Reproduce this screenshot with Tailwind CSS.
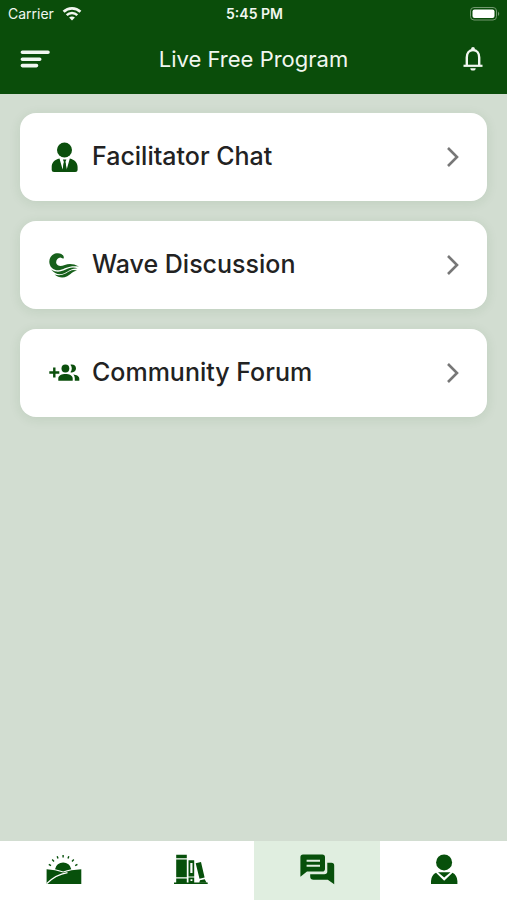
<!DOCTYPE html>
<html lang="en">
<head>
<meta charset="utf-8">
<meta name="viewport" content="width=device-width, initial-scale=1">
<title>Live Free Program</title>
<script src="https://cdn.jsdelivr.net/npm/@tailwindcss/browser@4"></script>
</head>
<body class="flex min-h-screen flex-col bg-[#d2ddd1] font-['Inter','Liberation_Sans',sans-serif] text-[#222]">
<header class="bg-[#0a4d0a] text-[#f1f7f0]">
  <div class="grid h-7 grid-cols-3 items-center pr-1.5 pl-2 text-sm">
    <div class="flex items-center gap-2">
      <span>Carrier</span>
      <svg class="h-4 w-5" viewBox="0 0 20 16" fill="none" stroke="currentColor" aria-hidden="true"><path d="M1.6 5.8C6.2 1.2 13.8 1.2 18.4 5.8" stroke-width="2.7"/><path d="M4.7 9.1C7.7 6.2 12.3 6.2 15.3 9.1" stroke-width="2.5"/><path d="M10 14.6 7.1 11.6C8.8 10.1 11.2 10.1 12.9 11.6Z" fill="currentColor" stroke="none"/></svg>
    </div>
    <span class="text-center font-semibold">5:45 PM</span>
    <svg class="h-4 w-8 justify-self-end" viewBox="0 0 32 16" aria-hidden="true"><rect x="1.5" y="1.5" width="26" height="12.5" rx="3.5" fill="none" stroke="#72986f"/><rect x="3.5" y="3.5" width="22" height="8.5" rx="2" fill="#fff"/><path d="M29 5.5Q31.5 7.8 29 10Z" fill="#72986f"/></svg>
  </div>
  <div class="grid h-[66px] grid-cols-[32px_1fr_32px] items-center px-5 pb-1">
    <button type="button" aria-label="Menu"><svg class="h-5 w-8" viewBox="0 0 32 20" stroke="currentColor" stroke-width="3.6" stroke-linecap="round" aria-hidden="true"><path d="M2.4 3.2H28M2.4 10.2H19.7M2.4 16.6H16.5"/></svg></button>
    <h1 class="text-center text-[22px] leading-7">Live Free Program</h1>
    <button type="button" aria-label="Notifications" class="justify-self-end"><svg class="h-7 w-7" viewBox="0 0 28 28" fill="none" stroke="currentColor" stroke-width="2.4" aria-hidden="true"><path d="M5.6 20.8H22.4" stroke-linecap="square" stroke-width="2.2"/><path d="M7.8 20V12.5C7.8 8.2 10 5 14 5S20.2 8.2 20.2 12.5V20"/><path d="M12.1 4.8V3.8A1.9 1.9 0 0 1 15.9 3.8V4.8ZM11.3 23.2H16.7A2.7 2.3 0 0 1 11.3 23.2Z" fill="currentColor" stroke="none"/></svg></button>
  </div>
</header>

<main class="flex flex-1 flex-col gap-5 px-5 pt-[19px] text-[25px] font-medium">
  <a href="#facilitator" class="flex h-[88px] items-center gap-3 rounded-2xl bg-white pr-[26px] pl-7 shadow-[0_2px_12px_rgba(30,90,30,0.10)]">
    <svg class="size-8" viewBox="0 0 32 32" fill="#0b4f0c" aria-hidden="true"><circle cx="16.5" cy="9" r="7.5"/><path d="M11.5 17.5C6.5 18.7 3.7 21.5 3.7 26V29Q3.7 31 6 31H27.3Q29.6 31 29.6 29V26C29.6 21.5 26.5 18.7 21.8 17.5L18.7 28.5 17.4 21 18.4 18.5H14.9L15.9 21 14.6 28.5Z"/><path d="M15.8 21.5H17.5L18.3 27.5 16.7 30.5 15 27.5Z"/></svg>
    <span class="flex-1">Facilitator Chat</span>
    <svg class="h-6 w-4" viewBox="0 0 16 24" fill="none" stroke="#777" stroke-width="2.6" aria-hidden="true"><path d="M3 3 12 12 3 21"/></svg>
  </a>
  <a href="#wave" class="flex h-[88px] items-center gap-3 rounded-2xl bg-white pr-[26px] pl-7 shadow-[0_2px_12px_rgba(30,90,30,0.10)]">
    <svg class="size-8" viewBox="0 0 32 32" fill="#17601b" aria-hidden="true"><path d="M15.8 9.2C16.1 5.8 12.7 3.7 8.6 4.3C3.4 5.1.5 9.5 1.5 14.5C2.6 19.8 7.4 22 12.1 21C17.6 19.7 21 16 31 17.6C25.5 14.7 21 14.5 16.8 16C12.6 17.5 9.5 17.2 8.4 14.6C7.4 11.8 9.6 8.8 12.4 8.6C13.5 8.7 14.3 9.8 15.8 9.2Z"/><path d="M3.1 20.5C10 25 15.4 21.5 20.1 19.6C23.4 18.2 25.8 18.2 29.6 19.2C23.8 19.2 20.3 22.3 16.4 24.2C11.5 26.3 6.7 25 3.1 20.5Z"/><path d="M6.5 25.6C14.7 27.4 17.5 24.3 21.5 22.3C24.2 20.9 26.5 20.8 29 21.7C24.5 22.3 22.5 25.5 19.2 27.3C15 29.4 10.3 28.8 6.5 25.6Z"/></svg>
    <span class="flex-1">Wave Discussion</span>
    <svg class="h-6 w-4" viewBox="0 0 16 24" fill="none" stroke="#777" stroke-width="2.6" aria-hidden="true"><path d="M3 3 12 12 3 21"/></svg>
  </a>
  <a href="#community" class="flex h-[88px] items-center gap-3 rounded-2xl bg-white pr-[26px] pl-7 shadow-[0_2px_12px_rgba(30,90,30,0.10)]">
    <svg class="size-8" viewBox="0 0 32 32" fill="#0b4f0c" aria-hidden="true"><path d="M5.1 10.5H7.5V14.3H11.3V16.7H7.5V20.5H5.1V16.7H1.3V14.3H5.1Z"/><circle cx="17.4" cy="11.5" r="3.9"/><path d="M10.3 23.7V21.4C10.3 18.5 14 17.1 17.5 17.1S24.7 18.5 24.7 21.4V23.7ZM22.4 7.8C25.5 7 28 8.8 28 11.5S25.5 16 22.4 15.2C24.3 13 24.3 10 22.4 7.8ZM25.2 17.4C28.7 17.8 31.3 19.2 31.3 21.5V23.7H26.8V21.5C26.8 19.8 26.3 18.5 25.2 17.4Z"/></svg>
    <span class="flex-1">Community Forum</span>
    <svg class="h-6 w-4" viewBox="0 0 16 24" fill="none" stroke="#777" stroke-width="2.6" aria-hidden="true"><path d="M3 3 12 12 3 21"/></svg>
  </a>
</main>

<nav aria-label="Main" class="grid h-[59px] grid-cols-4 bg-white text-[#07500b]">
  <a href="#home" aria-label="Home" class="flex items-center justify-center"><svg class="h-9 w-10" viewBox="0 0 40 36" fill="currentColor" aria-hidden="true"><path d="M12 16.2A8.3 8.3 0 0 1 28.3 16.2Q24 17.2 20.2 18.5Q16 17 12 16.2Z"/><path d="M3.6 16.3Q12 16.8 20.2 19.6Q28 16.8 38.3 16.3V31H3.6Z"/><path d="M3.6 30.8Q12.5 21.5 24.5 19.6" fill="none" stroke="#fff" stroke-width="1.3"/><path d="M8 12.6 5.8 11.3M11 8.4 9.2 6.6M15 5.5 14.2 3.2M20.1 4.5V2M25 5.5 25.8 3.2M29 8.4 30.8 6.6M32.2 12.6 34.4 11.3" fill="none" stroke="currentColor" stroke-width="1.4"/></svg></a>
  <a href="#library" aria-label="Library" class="flex items-center justify-center"><svg class="h-9 w-10" viewBox="0 0 40 36" fill="currentColor" aria-hidden="true"><path d="M6.2 1.8H16.8V5.2H6.2ZM6.2 6.6H16.8V24.2H6.2ZM6.2 25.5H16.8V29.5H6.2ZM4 29.5H37.7V31H4Z"/><path fill-rule="evenodd" d="M18.5 7.2H24.2V23.5H18.5ZM20.3 10H22.5V20H20.3ZM18.5 24.5H24.2V30H18.5ZM20.5 26.2H22.4V28H20.5Z"/><path d="M25.7 10.3 31 9 34.6 24.4 29.5 25.7ZM29.2 29.8 30 27.3 34.7 26.2 36.6 29.8Z"/></svg></a>
  <a href="#chat" aria-label="Discussions" aria-current="page" class="flex items-center justify-center bg-[#e0eee0]"><svg class="h-9 w-10" viewBox="0 0 40 36" fill="currentColor" aria-hidden="true"><path fill-rule="evenodd" d="M6 1.4H25.3Q28 1.4 28 4.2V15.8Q28 18.6 25.3 18.6H10L3.4 23.7V4.2Q3.4 1.4 6 1.4ZM9.6 6.8V8.7H23V6.8ZM9.6 11.8V13.7H23V11.8Z"/><path d="M30.3 9.8H34.5Q37.2 9.8 37.2 12.5V31.2L30.8 26.7H16.5Q13.2 26.7 13.2 23.5V21.3H27.2Q30.3 21.3 30.3 18.5Z"/></svg></a>
  <a href="#profile" aria-label="Profile" class="flex items-center justify-center"><svg class="h-9 w-10" viewBox="0 0 40 36" fill="currentColor" aria-hidden="true"><circle cx="20.1" cy="9.4" r="8"/><path d="M14 19.2H26.5L20.2 24.6ZM12 19.8 20.2 27.8 28.5 19.8Q33 22 33.4 28V31H7V28Q7.4 22 12 19.8Z"/></svg></a>
</nav>
</body>
</html>
